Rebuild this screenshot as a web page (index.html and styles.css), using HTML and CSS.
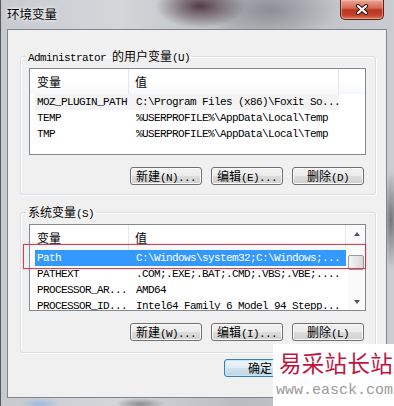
FILE: index.html
```html
<!DOCTYPE html>
<html lang="zh-CN">
<head>
    <meta charset="UTF-8">
    <title>环境变量</title>
    <link rel="stylesheet" href="styles.css">
</head>
<body>
    <div class="window">
        <div class="titlebar">
            <span class="title">环境变量</span>
            <div class="close">
                <svg width="14" height="11" viewBox="0 0 14 11">
                    <path d="M3 2 L11 9 M11 2 L3 9" stroke="#3a1510" stroke-width="4.2" stroke-linecap="round"/>
                    <path d="M3 2 L11 9 M11 2 L3 9" stroke="#fff" stroke-width="2.2" stroke-linecap="round"/>
                </svg>
            </div>
        </div>

        <div class="client">
            <fieldset class="group">
                <legend><span class="m">Administrator </span>的用户变量<span class="m">(U)</span></legend>
                <div class="list list-user">
                    <div class="list-main">
                        <div class="list-head">
                            <span class="hd-name">变量</span>
                            <span class="hd-val">值</span>
                        </div>
                        <div class="row inactive"><span class="c1 m">MOZ_PLUGIN_PATH</span><span class="c2 m">C:\Program Files (x86)\Foxit So...</span></div>
                        <div class="row"><span class="c1 m">TEMP</span><span class="c2 m">%USERPROFILE%\AppData\Local\Temp</span></div>
                        <div class="row"><span class="c1 m">TMP</span><span class="c2 m">%USERPROFILE%\AppData\Local\Temp</span></div>
                    </div>
                </div>
                <div class="buttons">
                    <button class="btn">新建<span class="m">(N)...</span></button>
                    <button class="btn">编辑<span class="m">(E)...</span></button>
                    <button class="btn">删除<span class="m">(D)</span></button>
                </div>
            </fieldset>

            <fieldset class="group group-sys">
                <legend>系统变量<span class="m">(S)</span></legend>
                <div class="list list-sys">
                    <div class="list-main">
                        <div class="list-head">
                            <span class="hd-name">变量</span>
                            <span class="hd-val">值</span>
                        </div>
                        <div class="row selected"><span class="c1 m">Path</span><span class="c2 m">C:\Windows\system32;C:\Windows;...</span></div>
                        <div class="row"><span class="c1 m">PATHEXT</span><span class="c2 m">.COM;.EXE;.BAT;.CMD;.VBS;.VBE;....</span></div>
                        <div class="row"><span class="c1 m">PROCESSOR_AR...</span><span class="c2 m">AMD64</span></div>
                        <div class="row"><span class="c1 m">PROCESSOR_ID...</span><span class="c2 m">Intel64 Family 6 Model 94 Stepp...</span></div>
                    </div>
                    <div class="scrollbar">
                        <div class="sb-btn"><span class="arrow-up"></span></div>
                        <div class="sb-track"><div class="sb-thumb"></div></div>
                        <div class="sb-btn"><span class="arrow-down"></span></div>
                    </div>
                </div>
                <div class="buttons">
                    <button class="btn">新建<span class="m">(W)...</span></button>
                    <button class="btn">编辑<span class="m">(I)...</span></button>
                    <button class="btn">删除<span class="m">(L)</span></button>
                </div>
            </fieldset>

            <div class="dialog-buttons">
                <button class="btn default">确定</button>
                <button class="btn" aria-label="取消"></button>
            </div>
        </div>
    </div>

    <div class="mark-row"></div>

    <div class="watermark">
        <div class="wm-name">易采站长站</div>
        <div class="wm-url">www.easck.com</div>
    </div>
</body>
</html>
```

FILE: styles.css
```css
* {
    box-sizing: border-box;
}
body {
    margin: 0;
    width: 394px;
    height: 406px;
    overflow: hidden;
    position: relative;
    font-family: "Noto Sans CJK SC", sans-serif;
    font-size: 12px;
    color: #000;
    background:
        radial-gradient(ellipse 45px 22px at 200px 6px, rgba(70, 45, 55, 0.9), rgba(70, 45, 55, 0) 100%),
        radial-gradient(ellipse 70px 30px at 270px 10px, rgba(110, 110, 120, 0.6), rgba(110, 110, 120, 0) 100%),
        radial-gradient(ellipse 8px 50px at 391px 220px, rgba(90, 95, 100, 0.8), rgba(90, 95, 100, 0) 100%),
        radial-gradient(ellipse 20px 6px at 40px 404px, rgba(150, 185, 225, 0.9), rgba(150, 185, 225, 0) 100%),
        radial-gradient(ellipse 25px 6px at 140px 404px, rgba(110, 110, 115, 0.7), rgba(110, 110, 115, 0) 100%),
        linear-gradient(to right, #c6cacf, #d4d7da 30%, #b9bcc0 60%, #c9ccd0);
}
.window {
    height: 406px;
    border-left: 1px solid #55595e;
    display: flex;
    flex-direction: column;
}
.titlebar {
    height: 29px;
    display: flex;
    justify-content: space-between;
    align-items: flex-start;
    padding-left: 6px;
}
.title {
    margin-top: 6px;
    line-height: 16px;
    font-size: 12.5px;
    text-shadow: 0 0 6px rgba(255, 255, 255, 0.9), 0 0 3px rgba(255, 255, 255, 0.9);
}
.close {
    width: 44px;
    height: 20px;
    margin-right: 10px;
    border: 1px solid #5a2219;
    border-top: none;
    border-radius: 0 0 5px 5px;
    background: linear-gradient(#e9a796, #d46a55 42%, #b9341f 52%, #c3432c 80%, #e27a5d);
    box-shadow: inset 0 0 0 1px rgba(255, 200, 180, 0.5);
    display: flex;
    align-items: center;
    justify-content: center;
}
.client {
    margin-left: 6px;
    width: 380px;
    height: 369px;
    background: #f0f0f0;
    border: 1px solid #80858b;
    padding: 18px 10px 0 12px;
}
.m {
    font-family: "Liberation Mono", monospace;
    font-size: 11px;
    letter-spacing: -0.6px;
}
.group {
    margin: 0;
    min-width: 0;
    padding: 4px 9px 9px 8px;
    border: 1px solid #d5dfe5;
    border-radius: 3px;
    box-shadow: inset 1px 1px 0 #fff, 1px 1px 0 #fff;
}
.group-sys {
    margin-top: 9px;
    padding-bottom: 11px;
}
.group legend {
    padding: 0 2px;
    margin-left: -3px;
    height: 16px;
    line-height: 16px;
}
.list {
    height: 87px;
    background: #fff;
    border: 1px solid #828790;
    display: flex;
    overflow: hidden;
}
.list-main {
    flex: 1;
    min-width: 0;
}
.list-head {
    height: 25px;
    display: flex;
    align-items: stretch;
    background: linear-gradient(#fff, #fff 55%, #f6f7f9);
}
.list-head span {
    display: flex;
    align-items: center;
    border-right: 1px solid #e3e6ea;
}
.hd-name {
    width: 99px;
    padding-left: 7px;
}
.hd-val {
    padding-left: 6px;
}
.list-user .hd-val {
    width: 210px;
}
.list-sys .hd-val {
    width: 217px;
}
.row {
    height: 16px;
    line-height: 16px;
    margin-left: 5px;
    display: flex;
    white-space: nowrap;
    overflow: hidden;
}
.list-user .row {
    width: 304px;
}
.list-sys .row {
    width: 311px;
}
.c1 {
    width: 94px;
    padding-left: 2px;
    overflow: hidden;
}
.c2 {
    flex: 1;
    padding-left: 7px;
    overflow: hidden;
}
.row.inactive {
    background: #f3f3f3;
}
.row.selected {
    background: #3399ff;
    color: #fff;
}
.scrollbar {
    width: 17px;
    display: flex;
    flex-direction: column;
    background: #fafafa;
}
.sb-btn {
    height: 17px;
    display: flex;
    align-items: center;
    justify-content: center;
}
.arrow-up,
.arrow-down {
    width: 0;
    height: 0;
    border-left: 3.5px solid transparent;
    border-right: 3.5px solid transparent;
}
.arrow-up {
    border-bottom: 4px solid #555;
}
.arrow-down {
    border-top: 4px solid #555;
}
.sb-track {
    flex: 1;
    padding-top: 13px;
}
.sb-thumb {
    width: 16px;
    height: 15px;
    border: 1px solid #9a9a9a;
    border-radius: 2px;
    background: linear-gradient(to right, #f4f4f4, #e6e6e6 50%, #d8d8d8);
}
.buttons {
    margin-top: 12px;
    display: flex;
    justify-content: flex-end;
    gap: 9px;
    padding-right: 2px;
}
.btn {
    width: 72px;
    height: 18px;
    padding: 0;
    border: 1px solid #707070;
    border-radius: 3px;
    background: linear-gradient(#f2f2f2, #ebebeb 50%, #dddddd 50%, #cfcfcf);
    box-shadow: inset 0 0 0 1px #fbfbfb;
    font-family: "Noto Sans CJK SC", sans-serif;
    font-size: 12px;
    line-height: 16px;
    color: #000;
}
.dialog-buttons {
    margin-top: 6px;
    display: flex;
    justify-content: flex-end;
    gap: 8px;
}
.btn.default {
    border-color: #3c7fb1;
    background: linear-gradient(#eef5f9, #dfecf3 50%, #cde2ec 50%, #bed7e4);
    box-shadow: inset 0 0 0 1px #c8e6f5;
}
.watermark {
    position: absolute;
    left: 273px;
    top: 344px;
    right: 0;
    bottom: 0;
    background: #fff;
    padding: 3px 0 0 6px;
}
.wm-name {
    font-family: "Noto Sans CJK SC", sans-serif;
    font-size: 22.5px;
    line-height: 30px;
    color: #c0143c;
    letter-spacing: 0.3px;
}
.wm-url {
    margin-top: 6px;
    margin-left: -3px;
    font-family: "Liberation Mono", monospace;
    font-size: 15px;
    line-height: 16px;
    color: #9a9a9a;
}
.mark-row {
    position: absolute;
    left: 23px;
    top: 244px;
    width: 343px;
    height: 25px;
    border: 1px solid rgba(200, 45, 65, 0.9);
    box-shadow: 0 0 2px rgba(230, 100, 120, 0.4);
}
```
